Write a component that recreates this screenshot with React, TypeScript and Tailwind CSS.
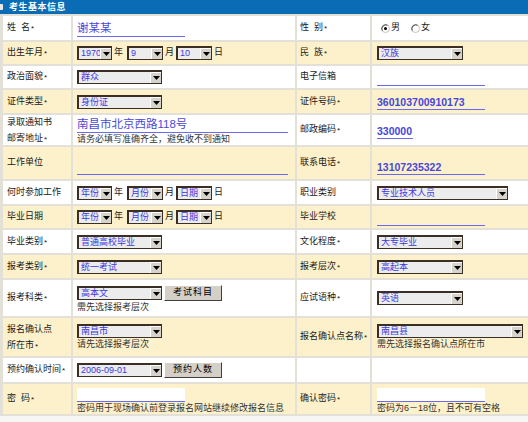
import React from 'react';

const Req = () => <span className="relative top-[1px] ml-[1px] text-[8px]">*</span>;

function Arrow() {
  return (
    <svg width="7" height="4" viewBox="0 0 7 4">
      <path d="M0 0h7L3.5 4z" fill="#000" />
    </svg>
  );
}

function Sel({ w, v }: { w: string; v: string }) {
  return (
    <div className={`flex h-[14px] shrink-0 border border-[#3b2f23] border-t-2 border-l-2 bg-[#ececec] ${w}`}>
      <span className="flex-1 overflow-hidden whitespace-nowrap pl-[2px] text-[9px] leading-[11px] text-[#3a3ae0]">{v}</span>
      <span className="flex w-[11px] items-center justify-center border-t border-l border-t-white border-l-white bg-[#d6d3cc]">
        <Arrow />
      </span>
    </div>
  );
}

function Btn({ t }: { t: string }) {
  return (
    <div className="ml-[2px] flex h-[16px] w-[58px] items-center justify-center border border-t-white border-l-white border-r-[#404040] border-b-[#404040] bg-[#d4d0c8] text-[9px] tracking-[1px] text-black">
      {t}
    </div>
  );
}

function Line({ w, children, white }: { w: string; children?: React.ReactNode; white?: boolean }) {
  return (
    <div className={`flex h-[17px] items-end border-b border-[#6a6aee] ${white ? 'bg-white' : ''} ${w}`}>
      {children}
    </div>
  );
}

function Radio({ on }: { on?: boolean }) {
  return (
    <svg width="9" height="9" viewBox="0 0 9 9">
      <circle cx="4.5" cy="4.5" r="4" fill="#fff" stroke="#c8c4bc" />
      <path d="M1.2 6.5A4 4 0 0 1 6.5 1.2" fill="none" stroke="#404040" />
      {on && <circle cx="4.5" cy="4.5" r="1.5" fill="#000" />}
    </svg>
  );
}

function DateSel({ y, m, d }: { y: string; m: string; d: string }) {
  return (
    <div className="flex items-center text-[9px]">
      <Sel w="w-[35px]" v={y} />
      <span className="ml-[2px] mr-[4px]">年</span>
      <Sel w="w-[36px]" v={m} />
      <span className="ml-[2px] mr-[2px]">月</span>
      <Sel w="w-[36px]" v={d} />
      <span className="ml-[2px]">日</span>
    </div>
  );
}

const Hint = ({ t }: { t: string }) => (
  <div className="mt-[1px] whitespace-nowrap text-[9px] leading-[11px] text-[#333]">{t}</div>
);

const big = 'text-[11.5px] leading-[15px] text-[#4a4ad8]';
const num = 'font-bold text-[10.5px] leading-[13px] text-[#4646dc]';

type RowDef = { l: React.ReactNode; v: React.ReactNode; r: React.ReactNode; rv: React.ReactNode };

const rows: RowDef[] = [
  {
    l: <>姓&nbsp;&nbsp;名<Req /></>,
    v: <Line w="w-[108px]"><span className={big}>谢某某</span></Line>,
    r: <>性&nbsp;&nbsp;别<Req /></>,
    rv: (
      <div className="flex items-center pl-[4px] text-[9px]">
        <Radio on /><span className="ml-[1px]">男</span>
        <span className="ml-[11px]"><Radio /></span><span className="ml-[1px]">女</span>
      </div>
    ),
  },
  {
    l: <>出生年月<Req /></>,
    v: <DateSel y="1970" m="9" d="10" />,
    r: <>民&nbsp;&nbsp;族<Req /></>,
    rv: <Sel w="w-[86px]" v="汉族" />,
  },
  {
    l: <>政治面貌<Req /></>,
    v: <Sel w="w-[85px]" v="群众" />,
    r: <>电子信箱</>,
    rv: <Line w="w-[108px]" />,
  },
  {
    l: <>证件类型<Req /></>,
    v: <Sel w="w-[85px]" v="身份证" />,
    r: <>证件号码<Req /></>,
    rv: <Line w="w-[108px]"><span className={num}>360103700910173</span></Line>,
  },
  {
    l: <div className="leading-[16px]">录取通知书<br />邮寄地址<Req /></div>,
    v: (
      <div className="flex flex-col">
        <Line w="w-[211px]"><span className={big}>南昌市北京西路118号</span></Line>
        <Hint t="请务必填写准确齐全，避免收不到通知" />
      </div>
    ),
    r: <>邮政编码<Req /></>,
    rv: <Line w="w-[36px]"><span className={num}>330000</span></Line>,
  },
  {
    l: <>工作单位</>,
    v: <div className="pt-[6px]"><Line w="w-[211px]" /></div>,
    r: <>联系电话<Req /></>,
    rv: <div className="pt-[6px]"><Line w="w-[108px]"><span className={num}>13107235322</span></Line></div>,
  },
  {
    l: <>何时参加工作</>,
    v: <DateSel y="年份" m="月份" d="日期" />,
    r: <>职业类别</>,
    rv: <Sel w="w-[131px]" v="专业技术人员" />,
  },
  {
    l: <>毕业日期</>,
    v: <DateSel y="年份" m="月份" d="日期" />,
    r: <>毕业学校</>,
    rv: <Line w="w-[108px]" />,
  },
  {
    l: <>毕业类别<Req /></>,
    v: <Sel w="w-[85px]" v="普通高校毕业" />,
    r: <>文化程度<Req /></>,
    rv: <Sel w="w-[86px]" v="大专毕业" />,
  },
  {
    l: <>报考类别<Req /></>,
    v: <Sel w="w-[85px]" v="统一考试" />,
    r: <>报考层次<Req /></>,
    rv: <Sel w="w-[86px]" v="高起本" />,
  },
  {
    l: <>报考科类<Req /></>,
    v: (
      <div className="flex flex-col pt-[2px]">
        <div className="flex h-[16px] items-center">
          <Sel w="w-[85px]" v="高本文" />
          <Btn t="考试科目" />
        </div>
        <Hint t="需先选择报考层次" />
      </div>
    ),
    r: <>应试语种<Req /></>,
    rv: <Sel w="w-[86px]" v="英语" />,
  },
  {
    l: <div className="leading-[16px]">报名确认点<br />所在市<Req /></div>,
    v: (
      <div className="flex flex-col">
        <Sel w="w-[85px]" v="南昌市" />
        <Hint t="请先选择报考层次" />
      </div>
    ),
    r: <>报名确认点名称<Req /></>,
    rv: (
      <div className="flex flex-col">
        <Sel w="w-[146px]" v="南昌县" />
        <Hint t="需先选择报名确认点所在市" />
      </div>
    ),
  },
  {
    l: <>预约确认时间<Req /></>,
    v: (
      <div className="flex h-[16px] items-center">
        <Sel w="w-[85px]" v="2006-09-01" />
        <Btn t="预约人数" />
      </div>
    ),
    r: null,
    rv: null,
  },
  {
    l: <>密&nbsp;&nbsp;码<Req /></>,
    v: (
      <div className="flex flex-col pt-[3px]">
        <div className="h-[14px] w-[108px] border-b border-[#6a6aee] bg-white" />
        <Hint t="密码用于现场确认前登录报名网站继续修改报名信息" />
      </div>
    ),
    r: <>确认密码<Req /></>,
    rv: (
      <div className="flex flex-col pt-[3px]">
        <div className="h-[14px] w-[108px] border-b border-[#6a6aee] bg-white" />
        <Hint t="密码为6－18位，且不可有空格" />
      </div>
    ),
  },
];

export default function App() {
  return (
    <div className="h-[422px] w-[528px] overflow-hidden bg-[#f6f6f4] font-['Liberation_Sans','Noto_Sans_CJK_SC',sans-serif] text-[#1a1a1a]">
      <div className="flex h-[14px] items-center bg-[#0a6cb5]">
        <div className="h-[6px] w-[3px] rounded-r-[1px] bg-[#e8e8e8]" />
        <span className="ml-[6px] text-[9px] font-bold leading-none tracking-[0.5px] text-white">考生基本信息</span>
      </div>
      <div className="grid grid-cols-[68px_222px_73px_156px] grid-rows-[24px_22px_22px_23px_30px_32px_23px_22px_23px_23px_36px_38px_24px_30px] gap-[2px] bg-[#e3e0d8] pt-[2px] pb-[2px] pl-[3px]">
        {rows.map((row, i) => {
          const bg = i % 2 === 0 ? 'bg-white' : 'bg-[#fdf1cb]';
          return (
            <React.Fragment key={i}>
              <div className={`flex items-center whitespace-nowrap pl-[4px] text-[9px] ${bg}`}>{row.l}</div>
              <div className={`flex items-center pl-[4px] ${bg}`}>{row.v}</div>
              <div className={`flex items-center whitespace-nowrap pl-[3px] text-[9px] ${bg}`}>{row.r}</div>
              <div className={`flex items-center pl-[5px] ${bg}`}>{row.rv}</div>
            </React.Fragment>
          );
        })}
      </div>
    </div>
  );
}
